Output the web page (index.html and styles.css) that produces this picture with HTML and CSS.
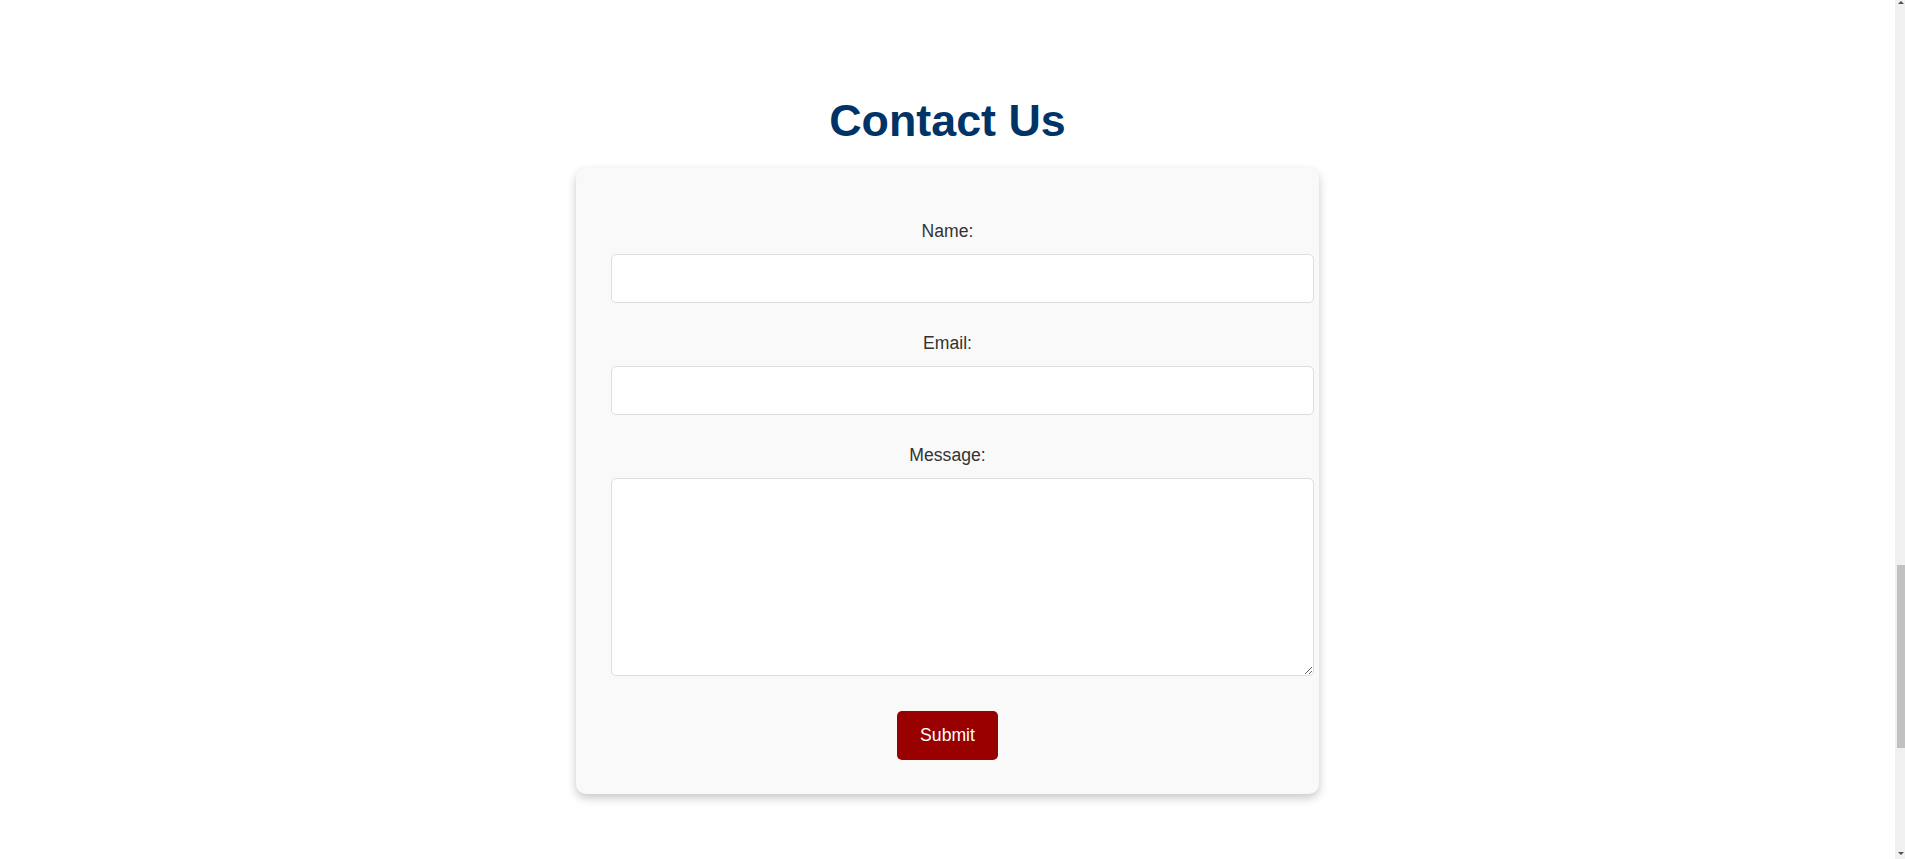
FILE: index.html
```html
<!DOCTYPE html>
<html lang="en">
<head>
<meta charset="utf-8">
<title>Contact Us</title>
<link rel="stylesheet" href="styles.css">
</head>
<body>
<main class="page">
  <h1 class="page-title">Contact Us</h1>
  <div class="card">
    <form class="contact-form">
      <div class="field">
        <label class="field-label" for="name">Name:</label>
        <input class="field-input" type="text" id="name" name="name">
      </div>
      <div class="field">
        <label class="field-label" for="email">Email:</label>
        <input class="field-input" type="email" id="email" name="email">
      </div>
      <div class="field">
        <label class="field-label" for="message">Message:</label>
        <textarea class="field-input field-textarea" id="message" name="message"></textarea>
      </div>
      <button class="submit-btn" type="submit">Submit</button>
    </form>
  </div>
</main>
<div class="scrollbar" aria-hidden="true">
  <span class="scroll-arrow scroll-arrow-up"></span>
  <span class="scroll-thumb"></span>
  <span class="scroll-arrow scroll-arrow-down"></span>
</div>
</body>
</html>
```

FILE: styles.css
```css
body {
  margin: 0;
  padding-right: 10px;
  background: #ffffff;
  font-family: "Liberation Sans", Arial, sans-serif;
}

.page {
  display: flex;
  flex-direction: column;
  align-items: center;
  padding: 95px 0 60px;
}

.page-title {
  margin: 0 0 22px;
  font-size: 44.8px;
  font-weight: bold;
  line-height: normal;
  color: #003366;
  text-align: center;
}

.card {
  box-sizing: border-box;
  width: 743px;
  padding: 53px 35px 34px;
  background: #f9f9f9;
  border-radius: 10px;
  box-shadow: 0 4px 10px rgba(0, 0, 0, 0.22);
}

.contact-form {
  display: flex;
  flex-direction: column;
  gap: 30px;
}

.field {
  display: flex;
  flex-direction: column;
  align-items: stretch;
}

.field-label {
  display: block;
  margin-bottom: 12px;
  font-size: 17.6px;
  line-height: normal;
  color: #333333;
  text-align: center;
}

.field-input {
  display: block;
  box-sizing: content-box;
  width: 100%;
  height: 19px;
  padding: 14px;
  margin: 0;
  border: 1px solid #dddddd;
  border-radius: 5px;
  background: #ffffff;
  font-family: "Liberation Sans", Arial, sans-serif;
  font-size: 16px;
  color: #333333;
}

.field-textarea {
  height: 168px;
  resize: both;
}

.submit-btn {
  align-self: center;
  margin-top: 5px;
  padding: 14px 23px;
  border: none;
  border-radius: 5px;
  background: #990000;
  color: #ffffff;
  font-family: "Liberation Sans", Arial, sans-serif;
  font-size: 17.6px;
  line-height: normal;
  cursor: pointer;
}

/* Browser scrollbar as it appears in the page capture */
.scrollbar {
  position: fixed;
  top: 0;
  right: 0;
  bottom: 0;
  width: 10px;
  background: #f0f0f0;
}

.scroll-thumb {
  position: absolute;
  top: 565px;
  left: 2px;
  width: 8px;
  height: 183px;
  background: #c1c1c1;
}

.scroll-arrow {
  position: absolute;
  left: 3px;
  width: 0;
  height: 0;
  border-left: 3px solid transparent;
  border-right: 3px solid transparent;
}

.scroll-arrow-up {
  top: 1px;
  border-bottom: 3px solid #505050;
}

.scroll-arrow-down {
  bottom: 4px;
  border-top: 3px solid #505050;
}
```
